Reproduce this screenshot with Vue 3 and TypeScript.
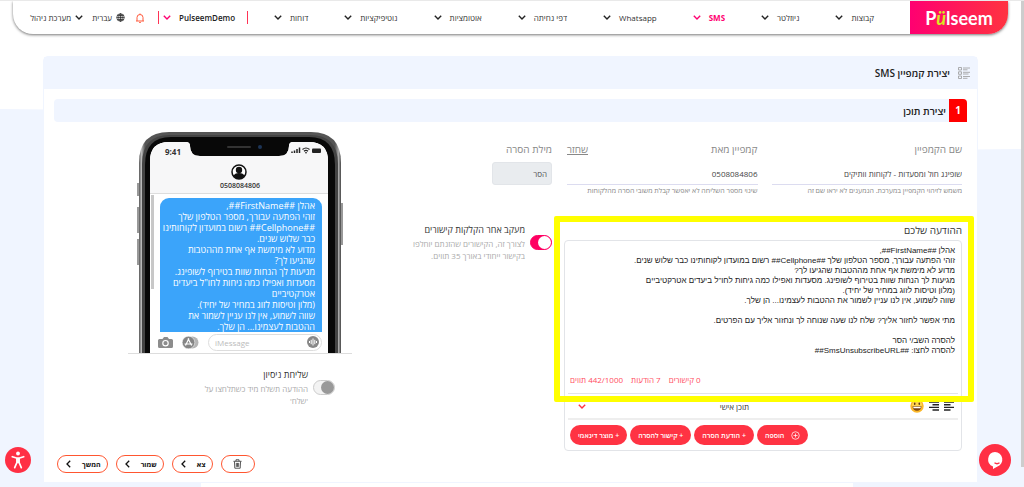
<script setup lang="ts">
import { ref } from 'vue'

interface NavItem { label: string; active?: boolean }

const navItems: NavItem[] = [
  { label: 'קבוצות' },
  { label: 'ניוזלטר' },
  { label: 'SMS', active: true },
  { label: 'Whatsapp' },
  { label: 'דפי נחיתה' },
  { label: 'אוטומציות' },
  { label: 'נוטיפיקציות' },
  { label: 'דוחות' },
]

const campaignName = ref('שופינג חול ומסעדות - לקוחות וותיקים')
const campaignFrom = ref('0508084806')
const removalWord = ref('הסר')
const trackLinks = ref(true)
const testSend = ref(false)
const reply = ref('')

const message = ref(
  [
    'אהלן ##FirstName##,',
    'זוהי הפתעה עבורך, מספר הטלפון שלך ##Cellphone## רשום במועדון לקוחותינו כבר שלוש שנים.',
    'מדוע לא מימשת אף אחת מההטבות שהגיעו לך?',
    'מגיעות לך הנחות שוות בטירוף לשופינג. מסעדות ואפילו כמה גיחות לחו"ל ביעדים אטרקטיביים',
    '(מלון וטיסות לזוג במחיר של יחיד).',
    'שווה לשמוע, אין לנו עניין לשמור את ההטבות לעצמינו... הן שלך.',
    '',
    'מתי אפשר לחזור אליך? שלח לנו שעה שנוחה לך ונחזור אליך עם הפרטים.',
    '',
    'להסרה השב/י הסר',
    'להסרה לחצו: ##SmsUnsubscribeURL##',
  ].join('\n'),
)

const bubbleLines: string[] = [
  'אהלן ##FirstName##,',
  'זוהי הפתעה עבורך, מספר הטלפון שלך',
  '##Cellphone## רשום במועדון לקוחותינו',
  'כבר שלוש שנים.',
  'מדוע לא מימשת אף אחת מההטבות',
  'שהגיעו לך?',
  'מגיעות לך הנחות שוות בטירוף לשופינג.',
  'מסעדות ואפילו כמה גיחות לחו"ל ביעדים',
  'אטרקטיביים',
  '(מלון וטיסות לזוג במחיר של יחיד).',
  'שווה לשמוע, אין לנו עניין לשמור את',
  'ההטבות לעצמינו... הן שלך.',
]

const insertActions: string[] = ['הודעת הסרה', 'קישור להסרה', 'מוצר דינאמי']
const stats: string[] = ['0 קישורים', '7 הודעות', '442/1000 תווים']
const steps: string[] = ['צא', 'שמור', 'המשך']
</script>

<template>
  <div class="page" dir="rtl">
    <div class="blob blob-left"></div>
    <div class="blob blob-right"></div>

    <header class="topbar">
      <a class="brand" href="#" dir="ltr" aria-label="Pulseem">
        <span>P</span><span class="brand-u">ü</span><span>lseem</span>
      </a>
      <nav class="nav">
        <a v-for="item in navItems" :key="item.label" href="#" class="nav-item" :class="{ active: item.active }">
          <span>{{ item.label }}</span>
          <svg class="chev" viewBox="0 0 8 5"><path d="M.8.8 4 4 7.200.8" /></svg>
        </a>
      </nav>
      <div class="account">
        <i class="bar"></i>
        <a href="#" class="nav-item account-name">
          <span>PulseemDemo</span>
          <svg class="chev pink" viewBox="0 0 8 5"><path d="M.8.8 4 4 7.200.8" /></svg>
        </a>
        <i class="bar thin"></i>
        <button class="icon-btn bell" type="button" aria-label="התראות">
          <svg viewBox="0 0 10 10"><path d="M1 8h8M2 8V4.500a3 3 0 0 1 6 0V8M5 1.500V.5M4.200 9.500h1.600" /></svg>
        </button>
        <a href="#" class="lang">
          <svg viewBox="0 0 10 10"><circle cx="5" cy="5" r="4.200" /><ellipse cx="5" cy="5" rx="2" ry="4.200" /><path d="M.8 5h8.400M5 .8v8.400M1.500 2.800h7M1.500 7.200h7" /></svg>
          <span>עברית</span>
        </a>
        <a href="#" class="nav-item admin">
          <svg class="chev" viewBox="0 0 8 5"><path d="M.8.8 4 4 7.200.8" /></svg>
          <span>מערכת ניהול</span>
        </a>
      </div>
    </header>

    <main class="card">
      <div class="card-head">
        <svg class="list-icon" viewBox="0 0 12 12"><path d="M.5.500h3v2.500h-3zM.5 4.800h3v2.500h-3zM.5 9h3v2.500h-3zM5 1h7M5 2.800h4.500M5 5.300h7M5 7h5.500M5 9.500h7M5 11.300h4.500" /></svg>
        <h1>יצירת קמפיין SMS</h1>
      </div>

      <div class="section-head">
        <span class="step-no">1</span>
        <h2>יצירת תוכן</h2>
      </div>

      <form class="content" @submit.prevent>
        <div class="col-main">
          <div class="fields">
            <div class="field">
              <div class="label-row"><label for="name">שם הקמפיין</label></div>
              <input id="name" v-model="campaignName" type="text" />
              <p>משמש לזיהוי הקמפיין במערכת. הנמענים לא יראו שם זה</p>
            </div>
            <div class="field">
              <div class="label-row"><label for="from">קמפיין מאת</label><a href="#">שחזר</a></div>
              <input id="from" v-model="campaignFrom" type="text" />
              <p>שינוי מספר השליחה לא יאפשר קבלת משובי הסרה מהלקוחות</p>
            </div>
          </div>

          <div class="message">
            <label for="msg">ההודעה שלכם</label>
            <div class="editor">
              <textarea id="msg" v-model="message" rows="12"></textarea>
              <div class="stats"><span v-for="s in stats" :key="s">{{ s }}</span></div>
              <div class="tools">
                <button class="icon-btn align" type="button" aria-label="יישור לשמאל">
                  <svg viewBox="0 0 10 10"><path d="M0 1h10M0 3.700h6.500M0 6.400h10M0 9h6.500" /></svg>
                </button>
                <button class="icon-btn align" type="button" aria-label="יישור לימין">
                  <svg viewBox="0 0 10 10"><path d="M0 1h10M3.500 3.700H10M0 6.400h10M3.500 9H10" /></svg>
                </button>
                <button class="icon-btn smile" type="button" aria-label="אימוג׳י">
                  <svg viewBox="0 0 14 14"><circle cx="7" cy="7" r="6.700" fill="#fbb829" /><circle cx="7" cy="6" r="5" fill="#ffd34d" /><ellipse cx="4.700" cy="4.800" rx=".8" ry="1.200" fill="#5c3a10" /><ellipse cx="9.300" cy="4.800" rx=".8" ry="1.200" fill="#5c3a10" /><path d="M2.500 7.300h9a4.500 4.500 0 0 1-9 0z" fill="#7a4312" /><path d="M3.200 7.700h7.600l-.3 1.500h-7z" fill="#fff" /></svg>
                </button>
                <button class="personal" type="button">
                  <span>תוכן אישי</span>
                  <svg class="chev red" viewBox="0 0 8 5"><path d="M.8.8 4 4 7.200.8" /></svg>
                </button>
              </div>
              <div class="inserts">
                <button class="pill add" type="button">
                  <svg viewBox="0 0 10 10"><circle cx="5" cy="5" r="4.200" /><path d="M5 2.800v4.400M2.800 5h4.400" /></svg>
                  <span>הוספה</span>
                </button>
                <button v-for="a in insertActions" :key="a" class="pill" type="button">+ {{ a }}</button>
              </div>
            </div>
            <div class="highlight"></div>
          </div>
        </div>

        <div class="col-mid">
          <div class="word">
            <div class="label-row"><label for="word">מילת הסרה</label></div>
            <input id="word" v-model="removalWord" type="text" disabled />
          </div>
          <div class="switch-row track">
            <input id="track" v-model="trackLinks" class="switch" type="checkbox" />
            <div>
              <label for="track">מעקב אחר הקלקות קישורים</label>
              <p>לצורך זה, הקישורים שהזנתם יוחלפו<br />בקישור ייחודי באורך 35 תווים.</p>
            </div>
          </div>
        </div>

        <div class="col-phone">
          <div class="phone">
            <svg class="frame" viewBox="0 0 208 222">
              <defs>
                <linearGradient id="edge" x1="0" x2="1" y1="0" y2="0">
                  <stop offset="0" stop-color="#555" /><stop offset=".012" stop-color="#bbb" /><stop offset=".03" stop-color="#555" />
                  <stop offset=".97" stop-color="#555" /><stop offset=".988" stop-color="#aaa" /><stop offset="1" stop-color="#444" />
                </linearGradient>
              </defs>
              <path d="M2 52v13M2 76v26M2 108v26M206 72v42" stroke="#999" stroke-width="2" />
              <path d="M3 222V32Q3 1 33 1h142q30 0 30 31v190z" fill="url(#edge)" />
              <path d="M6 222V33Q6 4 34 4h140q28 0 28 29v189z" fill="#444" />
              <path d="M9 222V34Q9 6 35 6h138q26 0 26 28v188z" fill="#080808" />
              <path d="M14 222V30q0-19 19-19h17q4 0 4 4 0 10 10 10h79q10 0 10-10 0-4 4-4h16q19 0 19 19v192z" fill="#fff" />
              <path d="M14 62V30q0-19 19-19h17q4 0 4 4 0 10 10 10h79q10 0 10-10 0-4 4-4h16q19 0 19 19v32z" fill="#f7f7f8" />
              <path d="M14 62.500h178" stroke="#ddd" />
              <path d="M16.500 64v94" stroke="#c8c8c8" stroke-width="3" />
              <path d="M92 16h22" stroke="#333" stroke-width="2" stroke-linecap="round" /><circle cx="124" cy="16" r="2" fill="#1d3557" />
              <path d="M156 22v-1.500M158.500 22v-2.500M161 22v-4M163.500 22v-5.500" stroke="#222" stroke-width="1.500" />
              <path d="M166.500 18.500q3.500-3 7 0M168 20.300q2-1.800 4 0" stroke="#222" stroke-width="1.200" fill="none" /><circle cx="170" cy="21.800" r=".8" />
              <rect x="176" y="17.500" width="9" height="4.500" rx="1" fill="#222" />
              <circle cx="103" cy="41" r="7" fill="#fff" stroke="#111" stroke-width="1.500" />
              <circle cx="103" cy="39" r="3.200" fill="#111" /><path d="M97.500 45q1-3 5.500-3t5.500 3q-2 3-5.500 3t-5.500-3z" fill="#111" />
            </svg>
            <span class="clock">9:41</span>
            <span class="caller">0508084806</span>
            <div class="bubble"><div v-for="line in bubbleLines" :key="line">{{ line }}</div></div>
            <div class="composer" dir="ltr">
              <svg class="cam" viewBox="0 0 15 11"><path d="M1.500 2h3L6 0h3.500L11 2h2.500Q15 2 15 3.500v6q0 1.500-1.500 1.500h-12Q0 11 0 9.500v-6Q0 2 1.500 2z" fill="#8c8c8c" /><circle cx="7.500" cy="6.200" r="2.700" fill="none" stroke="#fff" stroke-width="1.200" /></svg>
              <svg class="store" viewBox="0 0 17 13"><circle cx="10.500" cy="6.500" r="6" fill="#b5b5b5" /><circle cx="6.500" cy="6.500" r="6.300" fill="#858585" stroke="#fff" stroke-width=".5" /><path d="M6.900 2.500 3.500 9.500M6 2.500l3.600 7M2.500 8h8" stroke="#fff" stroke-width="1.200" /></svg>
              <div class="imessage">
                <input v-model="reply" type="text" placeholder="iMessage" aria-label="iMessage" />
                <svg viewBox="0 0 12 12"><circle cx="6" cy="6" r="6" fill="#888" /><path d="M2.500 5v2M4.200 3.800v4.400M6 2.500v7M7.800 3.800v4.400M9.500 5v2" stroke="#fff" /></svg>
              </div>
            </div>
          </div>
          <div class="switch-row test">
            <input id="test" v-model="testSend" class="switch" type="checkbox" />
            <div>
              <label for="test">שליחת ניסיון</label>
              <p>ההודעה תשלח מיד כשתלחצו על<br />'שלח'</p>
            </div>
          </div>
        </div>
      </form>

      <footer class="actions">
        <button type="button" class="outline trash" aria-label="מחיקה">
          <svg viewBox="0 0 10 11"><path d="M.5 2.500h9M3.300 2.300V.8h3.400v1.500M1.600 2.800l.4 7.400h6l.4-7.400M3.700 4.300v4.400M5 4.300v4.400M6.300 4.300v4.400" /></svg>
        </button>
        <button v-for="s in steps" :key="s" type="button" class="outline">
          <span>{{ s }}</span>
          <svg class="back" viewBox="0 0 5 8"><path d="M4.200.8 1 4l3.200 3.200" /></svg>
        </button>
      </footer>
    </main>

    <div class="foot-strip"></div>
    <div class="scroll-thumb"></div>
    <button class="float access" type="button" aria-label="נגישות">
      <svg viewBox="0 0 26 26"><circle cx="13" cy="6.500" r="1.900" fill="#fff" /><path d="M7.300 9.700 11.500 11h3l4.200-1.300M11.900 11.500v4l-2.200 5.200M14.100 11.500v4l2.200 5.200M13 11v4.500" fill="none" stroke="#fff" stroke-width="1.700" stroke-linecap="round" stroke-linejoin="round" /></svg>
    </button>
    <button class="float chat" type="button" aria-label="צ׳אט">
      <svg viewBox="0 0 32 32"><path d="M16 8a7.500 7.500 0 0 1 2.500 14.500L14 25v-2.500A7.500 7.500 0 0 1 16 8z" fill="#fff" /><path d="M15.500 18.800q2.500 1.800 5 0" fill="none" stroke="#ff2f44" stroke-width="1.400" /></svg>
    </button>
  </div>
</template>

<style>
body {
  margin: 0;
  background: #fff;
}
</style>

<style scoped>
* {
  box-sizing: border-box;
}
.page {
  position: relative;
  min-height: 100vh;
  overflow: hidden;
  border-top: 1px solid #e9e9e9;
  font-family: "Open Sans", "Noto Sans", "DejaVu Sans", sans-serif;
  font-size: 8px;
  color: #333;
}
h1, h2, p {
  margin: 0;
}
a {
  color: inherit;
  text-decoration: none;
}
button, input, textarea {
  font: inherit;
  color: inherit;
  margin: 0;
  padding: 0;
}
svg {
  display: block;
  flex: none;
}
.blob {
  position: absolute;
  background: #f0f5ff;
}
.blob-left {
  left: 0;
  top: 108px;
  bottom: 0;
  width: 50%;
  border-top-right-radius: 100% 100px;
}
.blob-right {
  right: 0;
  top: 148px;
  bottom: 0;
  width: 50%;
  border-top-left-radius: 100% 100px;
}
.topbar {
  position: relative;
  display: flex;
  align-items: center;
  height: 33px;
  margin: 0 16px 0 13px;
  background: #fff;
  border-radius: 0 0 20px 20px;
  box-shadow: 0 1px 3px #777;
}
.brand {
  display: flex;
  flex: none;
  align-items: center;
  justify-content: center;
  width: 98px;
  height: 33px;
  border-radius: 0 0 20px 0;
  background: linear-gradient(90deg, #ff0071, #ff3340);
  color: #fff;
  font: 700 18px/20px Lato, sans-serif;
}
.brand-u {
  color: #d5ec22;
  font-style: italic;
}
.nav {
  display: flex;
  gap: 36px;
  margin-right: 36px;
}
.nav-item {
  display: flex;
  align-items: center;
  gap: 8px;
  white-space: nowrap;
}
.nav-item.active {
  color: #ff0071;
  font-weight: 700;
}
.chev {
  width: 8px;
  height: 5px;
  fill: none;
  stroke: #222;
  stroke-width: 1.4;
}
.active .chev, .chev.pink {
  stroke: #ff0071;
}
.chev.red {
  stroke: #ff3343;
}
.account {
  display: flex;
  align-items: center;
  margin-right: 26px;
  white-space: nowrap;
}
.bar {
  width: 1px;
  height: 13px;
  background: #ff3355;
  margin-left: 12px;
}
.bar.thin {
  margin: 0 4px 0 9px;
}
.account-name {
  font-weight: 600;
  color: #222;
}
.icon-btn {
  display: block;
  border: 0;
  background: none;
}
.bell {
  margin-right: 4px;
}
.bell svg {
  width: 10px;
  height: 10px;
  fill: none;
  stroke: #ff5a3c;
}
.lang {
  display: flex;
  align-items: center;
  gap: 4px;
  margin: 0 10px 0 9px;
}
.lang svg {
  width: 9px;
  height: 9px;
  fill: none;
  stroke: #222;
  stroke-width: .8;
}
.nav-item.admin {
  gap: 4px;
}
.card {
  position: relative;
  margin: 22px 46px 0 43px;
  background: #fff;
  border: 1px solid #f0f5ff;
  border-radius: 5px 5px 0 0;
}
.card-head {
  display: flex;
  align-items: center;
  gap: 8px;
  height: 32px;
  padding: 0 7px;
  background: #f0f5ff;
}
.list-icon {
  width: 12px;
  height: 12px;
  fill: none;
  stroke: #999;
  stroke-width: .8;
}
h1, h2 {
  font-size: 10px;
  line-height: 14px;
  font-weight: 600;
  color: #222;
}
.section-head {
  display: flex;
  align-items: center;
  gap: 3px;
  height: 23px;
  margin: 10px 10px 0;
  background: #f0f5ff;
  border-radius: 4px;
}
.step-no {
  width: 18px;
  height: 23px;
  background: #f00;
  color: #fff;
  border-radius: 0 4px 0 0;
  text-align: center;
  font-size: 10px;
  line-height: 23px;
  font-weight: 700;
}
.content {
  display: flex;
  align-items: flex-start;
  padding: 19px 15px 0 14px;
}
.col-main {
  flex: 398 1 0;
  min-width: 0;
}
.col-mid {
  flex: 200 1 0;
  margin-right: 12px;
}
.col-phone {
  flex: 224 1 0;
  margin-left: 70px;
  margin-top: -10px;
}
.fields {
  display: flex;
  gap: 14px;
  padding-left: 3px;
}
.field {
  flex: 1;
  min-width: 0;
}
.label-row {
  display: flex;
  justify-content: space-between;
  font-size: 10px;
  line-height: 16px;
  color: #888;
}
.label-row a {
  text-decoration: underline;
}
.field input {
  display: block;
  width: 100%;
  height: 28px;
  padding: 5px 0 0;
  border: 0;
  border-bottom: 1px solid #dcdcf0;
  background: none;
  color: #444;
}
p {
  font-size: 8px;
  line-height: 12px;
  color: #aaa;
  white-space: nowrap;
}
.field p {
  font-size: 7px;
  color: #888;
}
.message {
  position: relative;
  margin-top: 25px;
}
.message > label {
  display: block;
  font-size: 10px;
  line-height: 16px;
}
.editor {
  margin-top: 2px;
  border: 1px solid #e2e4e8;
  border-radius: 4px;
}
textarea {
  display: block;
  width: 100%;
  height: 130px;
  padding: 5px 6px;
  border: 0;
  background: none;
  resize: none;
  overflow: hidden;
  font: 8px/10px "Liberation Sans", Arial, sans-serif;
  color: #222;
}
.stats {
  display: flex;
  justify-content: flex-end;
  gap: 8px;
  padding: 2px 5px 6px;
  line-height: 14px;
  color: #ff4d5e;
}
.tools {
  display: flex;
  align-items: center;
  gap: 5px;
  height: 27px;
  margin: 0 3px;
  padding: 0 4px;
  border-top: 1px solid #e2e4e8;
  border-bottom: 2px solid #eee;
}
.align svg {
  width: 10px;
  height: 10px;
  stroke: #222;
  stroke-width: 1.4;
}
.smile svg {
  width: 14px;
  height: 14px;
}
.personal {
  flex: 1;
  display: flex;
  align-items: center;
  justify-content: space-between;
  padding: 0 156px 0 6px;
  border: 0;
  background: none;
}
.inserts {
  display: flex;
  justify-content: flex-end;
  gap: 3px;
  padding: 5px;
}
.pill {
  display: flex;
  align-items: center;
  justify-content: center;
  height: 20px;
  padding: 0 8px;
  border: 0;
  border-radius: 10px;
  background: #ff3343;
  color: #fff;
  font-size: 7px;
  font-weight: 600;
  white-space: nowrap;
}
.add {
  gap: 7px;
}
.add svg {
  width: 9px;
  height: 9px;
  fill: none;
  stroke: #fff;
  stroke-width: .8;
}
.highlight {
  position: absolute;
  top: -6px;
  right: -12px;
  left: -10px;
  height: 186px;
  border: 6px solid #ff0;
  border-radius: 2px;
  pointer-events: none;
}
.word {
  width: 60px;
}
.word .label-row {
  white-space: nowrap;
}
.word input {
  display: block;
  width: 100%;
  height: 23px;
  margin-top: 5px;
  padding: 0 4px;
  border: 1px solid #e2e5e9;
  border-radius: 3px;
  background: #e9ecef;
  color: #555;
}
.switch-row {
  display: flex;
  align-items: flex-start;
  gap: 5px;
}
.switch-row label {
  display: block;
  font-size: 9px;
  line-height: 16px;
  white-space: nowrap;
}
.track {
  margin-top: 37px;
}
.switch {
  appearance: none;
  flex: none;
  width: 22px;
  height: 15px;
  margin-top: 13px;
  border-radius: 8px;
  background: #f3f3f3;
  border: 1px solid #ccc;
}
.switch::before {
  content: "";
  display: block;
  width: 13px;
  height: 13px;
  border-radius: 50%;
  background: #999;
}
.switch:checked {
  background: #ff0062;
  border-color: #ff0062;
}
.switch:checked::before {
  background: #fff;
}
.phone {
  position: relative;
  height: 223px;
  padding-top: 67px;
  border-bottom: 1px solid #ddd;
}
.frame {
  position: absolute;
  top: 0;
  right: 8px;
  width: 208px;
  height: 222px;
}
.clock {
  position: absolute;
  left: 37px;
  top: 15px;
  font-size: 8px;
  line-height: 12px;
  font-weight: 700;
}
.caller {
  position: absolute;
  top: 49px;
  left: 0;
  right: 0;
  text-align: center;
  font-size: 7px;
  line-height: 12px;
  font-weight: 600;
}
.bubble {
  position: relative;
  width: 162px;
  margin-right: 30px;
  padding: 2px 7px 0 0;
  border-radius: 9px 9px 0 0;
  background: #3ba4fa;
  color: #fff;
  font-size: 9px;
  line-height: 11px;
  white-space: nowrap;
}
.composer {
  position: relative;
  display: flex;
  align-items: center;
  gap: 9px;
  width: 164px;
  height: 20px;
  margin-right: 30px;
}
.cam {
  width: 15px;
  height: 11px;
}
.store {
  width: 17px;
  height: 13px;
}
.imessage {
  display: flex;
  flex: 1;
  align-items: center;
  min-width: 0;
  height: 17px;
  padding: 0 2px 0 6px;
  border: 1px solid #ddd;
  border-radius: 9px;
}
.imessage input {
  flex: 1;
  min-width: 0;
  border: 0;
  background: none;
}
.imessage input::placeholder {
  color: #bbb;
}
.imessage svg {
  width: 12px;
  height: 12px;
}
.test {
  margin: 13px 17px 0 0;
}
.actions {
  display: flex;
  justify-content: flex-end;
  gap: 8px;
  padding: 4px 13px 9px;
}
.outline {
  display: flex;
  align-items: center;
  justify-content: center;
  gap: 11px;
  height: 18px;
  padding: 0 6px 0 8px;
  border: 1px solid #ff5630;
  border-radius: 9px;
  background: #fff;
  font-size: 7px;
  font-weight: 700;
  color: #111;
}
.trash {
  width: 34px;
  padding: 0;
}
.trash svg {
  width: 9px;
  height: 10px;
  fill: none;
  stroke: #333;
  stroke-width: .9;
}
.back {
  width: 5px;
  height: 8px;
  fill: none;
  stroke: #111;
  stroke-width: 1.3;
}
.foot-strip {
  position: absolute;
  left: 201px;
  right: 171px;
  bottom: 0;
  height: 4px;
  background: #fff;
}
.scroll-thumb {
  position: absolute;
  top: 0;
  right: 0;
  width: 3px;
  height: 466px;
  background: #cdcdcd;
}
.float {
  position: absolute;
  border: 0;
  border-radius: 50%;
  background: #ff2f44;
}
.access {
  left: 5px;
  bottom: 14px;
  width: 26px;
  height: 26px;
}
.chat {
  right: 13px;
  bottom: 11px;
  width: 32px;
  height: 32px;
}
</style>
